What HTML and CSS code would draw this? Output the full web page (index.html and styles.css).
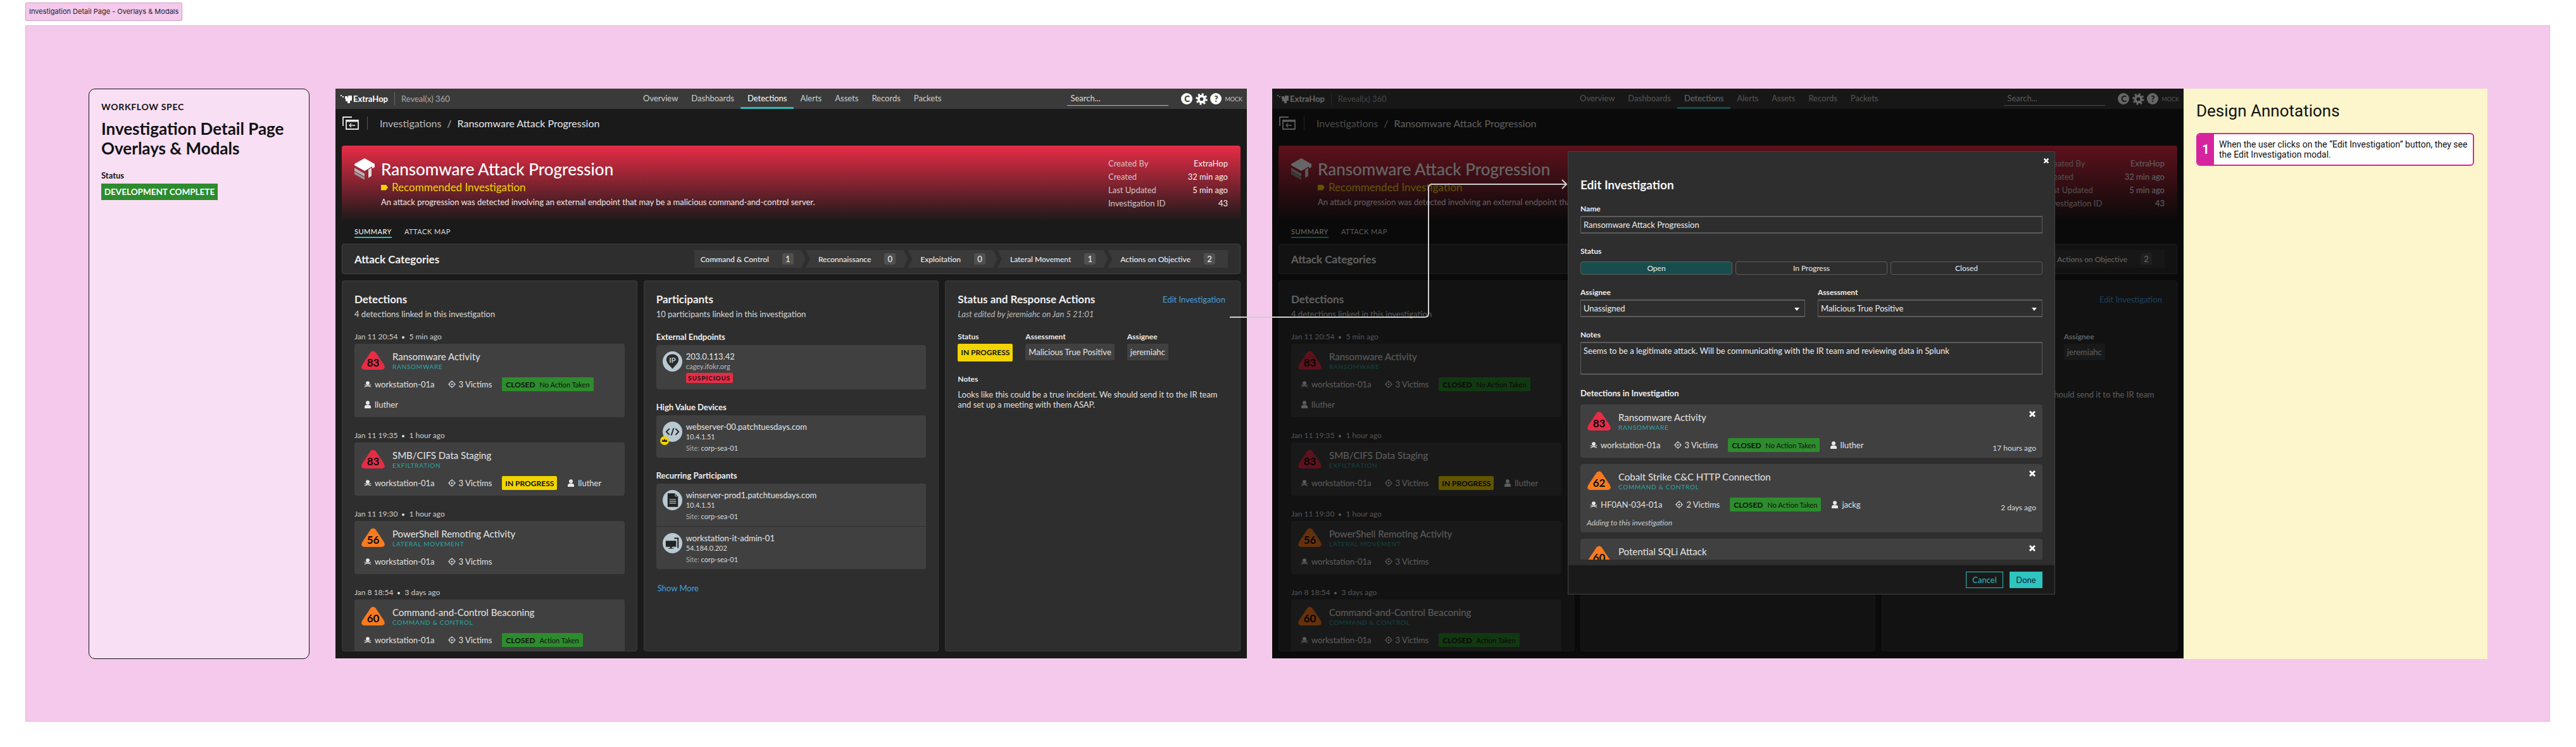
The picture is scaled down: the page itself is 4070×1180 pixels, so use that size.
FILE: index.html
```html
<!DOCTYPE html>
<html lang="en">
<head>
<meta charset="utf-8">
<title>Investigation Detail Page - Overlays &amp; Modals</title>
<link rel="stylesheet" href="styles.css">
</head>
<body>
<svg class="defs" xmlns="http://www.w3.org/2000/svg">
  <symbol id="tri" viewBox="0 0 37 30"><path d="M14.5 2.500Q18.500-1.500 22.500 2.500L35.500 22Q39.500 30 31 30L6 30Q-2.500 30 1.500 22Z"/></symbol>
  <symbol id="skull" viewBox="0 0 14 12"><path d="M7 .5C4.800.5 3.500 2 3.500 3.800 3.500 5 4.100 5.800 5 6.300V7.500H9V6.300C9.900 5.800 10.500 5 10.500 3.800 10.500 2 9.200.5 7 .5Z"/><path d="M1 6.800 13 11M13 6.800 1 11" stroke="currentColor" stroke-width="1.300" fill="none"/></symbol>
  <symbol id="target" viewBox="0 0 12 12"><circle cx="6" cy="6" r="4" fill="none" stroke="currentColor" stroke-width="1.200"/><circle cx="6" cy="6" r="1.300"/><path d="M6 0V2.200M6 9.800V12M0 6H2.200M9.800 6H12" stroke="currentColor" stroke-width="1.200"/></symbol>
  <symbol id="user" viewBox="0 0 12 12"><circle cx="6" cy="3.300" r="3"/><path d="M1 12V9.500C1 7.500 2.800 6.500 6 6.500S11 7.500 11 9.500V12Z"/></symbol>
  <symbol id="cross" viewBox="0 0 12 12"><path d="M2 2 10 10M10 2 2 10" stroke="currentColor" stroke-width="3" fill="none"/></symbol>
  <symbol id="logo" viewBox="0 0 20 16"><path d="M0 2h2v2H0zM3 4h2v2H3zM7 4h4v2h1V3h6v8h-3v4h-4v-3H8V8H7z"/></symbol>
  <symbol id="back" viewBox="0 0 26 21"><path d="M15 1H1V15M6 6H25V20H6Z" fill="none" stroke="currentColor" stroke-width="1.800"/><path d="M6 6H25V8.500H6Z"/><path d="M20 14H11M14 11 11 14 14 17" fill="none" stroke="currentColor" stroke-width="1.300"/></symbol>
  <symbol id="stack" viewBox="0 0 32 34"><path d="M0 21 12 28 16 30V34L0 25Z" fill="#999"/><path d="M0 15 12 22 16 24V29L0 20Z" fill="#b5b5b5"/><path d="M22 18 27 15V28L22 31Z" fill="#ddd"/><path d="M16 0 32 9V14L28 16V13L16 20 0 11V9Z" fill="#fff"/></symbol>
  <symbol id="gear" viewBox="0 0 20 20"><circle cx="10" cy="10" r="5" fill="none" stroke="currentColor" stroke-width="4"/><circle cx="10" cy="10" r="8" fill="none" stroke="currentColor" stroke-width="3.500" stroke-dasharray="3.100 3.180"/></symbol>
  <symbol id="ip" viewBox="0 0 32 32"><path d="M16 4C10 4 6 8 6 13 6 19 12 23 16 28 20 23 26 19 26 13 26 8 22 4 16 4Z" fill="#2b2b2b"/><text x="16" y="18" text-anchor="middle" font-family="Lato" font-weight="700" font-size="12" fill="#b9c9d1">IP</text></symbol>
  <symbol id="code" viewBox="0 0 32 32"><path d="M11 11 6 16 11 21M21 11 26 16 21 21M18 10 14 22" fill="none" stroke="#222" stroke-width="2"/></symbol>
  <symbol id="doc" viewBox="0 0 32 32"><path d="M8 5H20L25 10V27H8Z" fill="#222"/><path d="M20.500 5V9.500H25" fill="none" stroke="#b9c9d1"/><path d="M11 15H22M11 18H22M11 21H22" stroke="#b9c9d1" stroke-width="1.200"/></symbol>
  <symbol id="pc" viewBox="0 0 32 32"><path d="M5 12H22V22H15V24H18V25H9V24H12V22H5Z" fill="#222"/><path d="M19 7H26V24H24V9H19Z" fill="#222"/></symbol>
  <symbol id="crown" viewBox="0 0 14 14"><circle cx="7" cy="7" r="7" fill="#f2d400"/><path d="M3 5 5 7 7 4 9 7 11 5V9H3Z" fill="#222"/></symbol>
</svg>

<div class="frame-tag">Investigation Detail Page - Overlays &amp; Modals</div>

<section class="frame">
  <aside class="spec">
    <div class="spec-kicker">WORKFLOW SPEC</div>
    <h1 class="spec-title">Investigation Detail Page<br>Overlays &amp; Modals</h1>
    <div class="spec-label">Status</div>
    <div class="spec-badge">DEVELOPMENT COMPLETE</div>
  </aside>

  <!-- Base screen -->
  <main class="app">
    <header class="topbar">
      <div class="brand"><svg class="logo"><use href="#logo"/></svg><span class="brand-name">ExtraHop</span><span class="brand-product">Reveal(x) 360</span></div>
      <nav class="nav"><a>Overview</a><a>Dashboards</a><a class="on">Detections</a><a>Alerts</a><a>Assets</a><a>Records</a><a>Packets</a></nav>
      <div class="tools"><div class="search">Search...</div><span class="round">C</span><svg class="gear"><use href="#gear"/></svg><span class="round">?</span><span class="mock">MOCK</span></div>
    </header>
    <div class="crumbbar"><svg class="back"><use href="#back"/></svg><div class="crumbs"><span class="crumb-parent">Investigations</span><span class="crumb-sep">/</span><span>Ransomware Attack Progression</span></div></div>
    <div class="content">
      <div class="hero">
        <div class="hero-main">
          <svg class="stack"><use href="#stack"/></svg>
          <div>
            <h2 class="hero-title">Ransomware Attack Progression</h2>
            <div class="hero-rec"><span class="rec-mark"></span>Recommended Investigation</div>
            <p class="hero-desc">An attack progression was detected involving an external endpoint that may be a malicious command-and-control server.</p>
          </div>
        </div>
        <dl class="hero-meta"><dt>Created By</dt><dd>ExtraHop</dd><dt>Created</dt><dd>32 min ago</dd><dt>Last Updated</dt><dd>5 min ago</dd><dt>Investigation ID</dt><dd>43</dd></dl>
      </div>
      <div class="tabs"><span class="tab on">SUMMARY</span><span class="tab">ATTACK MAP</span></div>
      <div class="attack">
        <h3 class="attack-title">Attack Categories</h3>
        <div class="chevrons">
          <div class="chev first"><span>Command &amp; Control</span><b>1</b></div>
          <div class="chev"><span>Reconnaissance</span><b>0</b></div>
          <div class="chev"><span>Exploitation</span><b>0</b></div>
          <div class="chev"><span>Lateral Movement</span><b>1</b></div>
          <div class="chev last"><span>Actions on Objective</span><b>2</b></div>
        </div>
      </div>
      <div class="panels">
        <div class="panel">
          <h3 class="panel-title">Detections</h3>
          <p class="panel-sub">4 detections linked in this investigation</p>
          <div class="det-date">Jan 11 20:54<i></i>5 min ago</div>
          <article class="det-card">
            <div class="det-head"><div class="sev red"><svg><use href="#tri"/></svg><span>83</span></div><div><div class="det-name">Ransomware Activity</div><div class="det-cat">RANSOMWARE</div></div></div>
            <div class="det-row"><span class="mi host"><svg><use href="#skull"/></svg>workstation-01a</span><span class="mi"><svg><use href="#target"/></svg>3 Victims</span><span class="st closed"><b>CLOSED</b>No Action Taken</span><span class="mi"><svg><use href="#user"/></svg>lluther</span></div>
          </article>
          <div class="det-date">Jan 11 19:35<i></i>1 hour ago</div>
          <article class="det-card">
            <div class="det-head"><div class="sev red"><svg><use href="#tri"/></svg><span>83</span></div><div><div class="det-name">SMB/CIFS Data Staging</div><div class="det-cat">EXFILTRATION</div></div></div>
            <div class="det-row"><span class="mi host"><svg><use href="#skull"/></svg>workstation-01a</span><span class="mi"><svg><use href="#target"/></svg>3 Victims</span><span class="st progress"><b>IN PROGRESS</b></span><span class="mi"><svg><use href="#user"/></svg>lluther</span></div>
          </article>
          <div class="det-date">Jan 11 19:30<i></i>1 hour ago</div>
          <article class="det-card">
            <div class="det-head"><div class="sev orange"><svg><use href="#tri"/></svg><span>56</span></div><div><div class="det-name">PowerShell Remoting Activity</div><div class="det-cat">LATERAL MOVEMENT</div></div></div>
            <div class="det-row"><span class="mi host"><svg><use href="#skull"/></svg>workstation-01a</span><span class="mi"><svg><use href="#target"/></svg>3 Victims</span></div>
          </article>
          <div class="det-date">Jan 8 18:54<i></i>3 days ago</div>
          <article class="det-card">
            <div class="det-head"><div class="sev orange"><svg><use href="#tri"/></svg><span>60</span></div><div><div class="det-name">Command-and-Control Beaconing</div><div class="det-cat">COMMAND &amp; CONTROL</div></div></div>
            <div class="det-row"><span class="mi host"><svg><use href="#skull"/></svg>workstation-01a</span><span class="mi"><svg><use href="#target"/></svg>3 Victims</span><span class="st closed"><b>CLOSED</b>Action Taken</span></div>
          </article>
        </div>
        <div class="panel">
          <h3 class="panel-title">Participants</h3>
          <p class="panel-sub">10 participants linked in this investigation</p>
          <h4 class="group-title">External Endpoints</h4>
          <div class="plist"><div class="part ext"><div class="avatar"><svg><use href="#ip"/></svg></div><div><div class="part-name">203.0.113.42</div><div class="part-sub">cagey.ifokr.org</div><span class="susp">SUSPICIOUS</span></div></div></div>
          <h4 class="group-title">High Value Devices</h4>
          <div class="plist"><div class="part"><div class="avatar"><svg><use href="#code"/></svg><svg class="crown"><use href="#crown"/></svg></div><div><div class="part-name">webserver-00.patchtuesdays.com</div><div class="part-sub lt">10.4.1.51</div><div class="part-site"><span>Site:</span> corp-sea-01</div></div></div></div>
          <h4 class="group-title">Recurring Participants</h4>
          <div class="plist">
            <div class="part"><div class="avatar"><svg><use href="#doc"/></svg></div><div><div class="part-name">winserver-prod1.patchtuesdays.com</div><div class="part-sub lt">10.4.1.51</div><div class="part-site"><span>Site:</span> corp-sea-01</div></div></div>
            <div class="part"><div class="avatar"><svg><use href="#pc"/></svg></div><div><div class="part-name">workstation-it-admin-01</div><div class="part-sub lt">54.184.0.202</div><div class="part-site"><span>Site:</span> corp-sea-01</div></div></div>
          </div>
          <a class="show-more">Show More</a>
        </div>
        <div class="panel">
          <div class="status-head"><h3 class="panel-title">Status and Response Actions</h3><a class="edit-link">Edit Investigation</a></div>
          <p class="panel-sub edited">Last edited by jeremiahc on Jan 5 21:01</p>
          <div class="status-cols">
            <div><div class="field-label">Status</div><div class="status-big">IN PROGRESS</div></div>
            <div><div class="field-label">Assessment</div><div class="field-box">Malicious True Positive</div></div>
            <div><div class="field-label">Assignee</div><div class="field-box">jeremiahc</div></div>
          </div>
          <div class="field-label notes-label">Notes</div>
          <p class="notes-body">Looks like this could be a true incident. We should send it to the IR team and set up a meeting with them ASAP.</p>
        </div>
      </div>
    </div>
  </main>

  <!-- Screen with modal -->
  <main class="app second">
    <header class="topbar">
      <div class="brand"><svg class="logo"><use href="#logo"/></svg><span class="brand-name">ExtraHop</span><span class="brand-product">Reveal(x) 360</span></div>
      <nav class="nav"><a>Overview</a><a>Dashboards</a><a class="on">Detections</a><a>Alerts</a><a>Assets</a><a>Records</a><a>Packets</a></nav>
      <div class="tools"><div class="search">Search...</div><span class="round">C</span><svg class="gear"><use href="#gear"/></svg><span class="round">?</span><span class="mock">MOCK</span></div>
    </header>
    <div class="crumbbar"><svg class="back"><use href="#back"/></svg><div class="crumbs"><span class="crumb-parent">Investigations</span><span class="crumb-sep">/</span><span>Ransomware Attack Progression</span></div></div>
    <div class="content">
      <div class="hero">
        <div class="hero-main">
          <svg class="stack"><use href="#stack"/></svg>
          <div>
            <h2 class="hero-title">Ransomware Attack Progression</h2>
            <div class="hero-rec"><span class="rec-mark"></span>Recommended Investigation</div>
            <p class="hero-desc">An attack progression was detected involving an external endpoint that may be a malicious command-and-control server.</p>
          </div>
        </div>
        <dl class="hero-meta"><dt>Created By</dt><dd>ExtraHop</dd><dt>Created</dt><dd>32 min ago</dd><dt>Last Updated</dt><dd>5 min ago</dd><dt>Investigation ID</dt><dd>43</dd></dl>
      </div>
      <div class="tabs"><span class="tab on">SUMMARY</span><span class="tab">ATTACK MAP</span></div>
      <div class="attack">
        <h3 class="attack-title">Attack Categories</h3>
        <div class="chevrons">
          <div class="chev first"><span>Command &amp; Control</span><b>1</b></div>
          <div class="chev"><span>Reconnaissance</span><b>0</b></div>
          <div class="chev"><span>Exploitation</span><b>0</b></div>
          <div class="chev"><span>Lateral Movement</span><b>1</b></div>
          <div class="chev last"><span>Actions on Objective</span><b>2</b></div>
        </div>
      </div>
      <div class="panels">
        <div class="panel">
          <h3 class="panel-title">Detections</h3>
          <p class="panel-sub">4 detections linked in this investigation</p>
          <div class="det-date">Jan 11 20:54<i></i>5 min ago</div>
          <article class="det-card">
            <div class="det-head"><div class="sev red"><svg><use href="#tri"/></svg><span>83</span></div><div><div class="det-name">Ransomware Activity</div><div class="det-cat">RANSOMWARE</div></div></div>
            <div class="det-row"><span class="mi host"><svg><use href="#skull"/></svg>workstation-01a</span><span class="mi"><svg><use href="#target"/></svg>3 Victims</span><span class="st closed"><b>CLOSED</b>No Action Taken</span><span class="mi"><svg><use href="#user"/></svg>lluther</span></div>
          </article>
          <div class="det-date">Jan 11 19:35<i></i>1 hour ago</div>
          <article class="det-card">
            <div class="det-head"><div class="sev red"><svg><use href="#tri"/></svg><span>83</span></div><div><div class="det-name">SMB/CIFS Data Staging</div><div class="det-cat">EXFILTRATION</div></div></div>
            <div class="det-row"><span class="mi host"><svg><use href="#skull"/></svg>workstation-01a</span><span class="mi"><svg><use href="#target"/></svg>3 Victims</span><span class="st progress"><b>IN PROGRESS</b></span><span class="mi"><svg><use href="#user"/></svg>lluther</span></div>
          </article>
          <div class="det-date">Jan 11 19:30<i></i>1 hour ago</div>
          <article class="det-card">
            <div class="det-head"><div class="sev orange"><svg><use href="#tri"/></svg><span>56</span></div><div><div class="det-name">PowerShell Remoting Activity</div><div class="det-cat">LATERAL MOVEMENT</div></div></div>
            <div class="det-row"><span class="mi host"><svg><use href="#skull"/></svg>workstation-01a</span><span class="mi"><svg><use href="#target"/></svg>3 Victims</span></div>
          </article>
          <div class="det-date">Jan 8 18:54<i></i>3 days ago</div>
          <article class="det-card">
            <div class="det-head"><div class="sev orange"><svg><use href="#tri"/></svg><span>60</span></div><div><div class="det-name">Command-and-Control Beaconing</div><div class="det-cat">COMMAND &amp; CONTROL</div></div></div>
            <div class="det-row"><span class="mi host"><svg><use href="#skull"/></svg>workstation-01a</span><span class="mi"><svg><use href="#target"/></svg>3 Victims</span><span class="st closed"><b>CLOSED</b>Action Taken</span></div>
          </article>
        </div>
        <div class="panel"></div>
        <div class="panel">
          <div class="status-head"><h3 class="panel-title">Status and Response Actions</h3><a class="edit-link">Edit Investigation</a></div>
          <p class="panel-sub edited">Last edited by jeremiahc on Jan 5 21:01</p>
          <div class="status-cols">
            <div><div class="field-label">Status</div><div class="status-big">IN PROGRESS</div></div>
            <div><div class="field-label">Assessment</div><div class="field-box">Malicious True Positive</div></div>
            <div><div class="field-label">Assignee</div><div class="field-box">jeremiahc</div></div>
          </div>
          <div class="field-label notes-label">Notes</div>
          <p class="notes-body">Looks like this could be a true incident. We should send it to the IR team and set up a meeting with them ASAP.</p>
        </div>
      </div>
    </div>
    <div class="scrim"></div>
    <div class="modal">
      <svg class="modal-close"><use href="#cross"/></svg>
      <div class="modal-body">
        <h2 class="modal-title">Edit Investigation</h2>
        <div class="m-label">Name</div>
        <div class="m-input">Ransomware Attack Progression</div>
        <div class="m-label mt">Status</div>
        <div class="seg"><span class="on">Open</span><span>In Progress</span><span>Closed</span></div>
        <div class="m-two">
          <div><div class="m-label">Assignee</div><div class="m-input select">Unassigned<i class="caret"></i></div></div>
          <div><div class="m-label">Assessment</div><div class="m-input select">Malicious True Positive<i class="caret"></i></div></div>
        </div>
        <div class="m-label mt">Notes</div>
        <div class="m-input area">Seems to be a legitimate attack. Will be communicating with the IR team and reviewing data in Splunk</div>
        <div class="m-label dets">Detections in Investigation</div>
        <div class="m-list">
          <article class="det-card">
            <svg class="card-x"><use href="#cross"/></svg>
            <div class="det-head"><div class="sev red"><svg><use href="#tri"/></svg><span>83</span></div><div><div class="det-name">Ransomware Activity</div><div class="det-cat">RANSOMWARE</div></div></div>
            <div class="det-row"><span class="mi host"><svg><use href="#skull"/></svg>workstation-01a</span><span class="mi"><svg><use href="#target"/></svg>3 Victims</span><span class="st closed"><b>CLOSED</b>No Action Taken</span><span class="mi"><svg><use href="#user"/></svg>lluther</span><span class="ago">17 hours ago</span></div>
          </article>
          <article class="det-card">
            <svg class="card-x"><use href="#cross"/></svg>
            <div class="det-head"><div class="sev orange"><svg><use href="#tri"/></svg><span>62</span></div><div><div class="det-name">Cobalt Strike C&amp;C HTTP Connection</div><div class="det-cat">COMMAND &amp; CONTROL</div></div></div>
            <div class="det-row"><span class="mi host"><svg><use href="#skull"/></svg>HF0AN-034-01a</span><span class="mi"><svg><use href="#target"/></svg>2 Victims</span><span class="st closed"><b>CLOSED</b>No Action Taken</span><span class="mi"><svg><use href="#user"/></svg>jackg</span><span class="ago">2 days ago</span></div>
            <p class="det-note">Adding to this investigation</p>
          </article>
          <article class="det-card">
            <svg class="card-x"><use href="#cross"/></svg>
            <div class="det-head"><div class="sev orange"><svg><use href="#tri"/></svg><span>60</span></div><div><div class="det-name">Potential SQLi Attack</div><div class="det-cat">RANSOMWARE</div></div></div>
          </article>
        </div>
      </div>
      <footer class="modal-foot"><button class="btn-ghost">Cancel</button><button class="btn-solid">Done</button></footer>
    </div>
  </main>

  <aside class="notes">
    <h2 class="notes-title">Design Annotations</h2>
    <div class="note"><span class="note-num">1</span><p>When the user clicks on the “Edit Investigation” button, they see the Edit Investigation modal.</p></div>
  </aside>

  <svg class="connector" viewBox="0 0 3989 1100"><path d="M1903 461H2211Q2217 461 2217 455V257Q2217 251 2223 251H2435M2428 244 2435 251 2428 258" fill="none" stroke="#cfcfcf" stroke-width="2"/></svg>
</section>
</body>
</html>
```

FILE: styles.css
```css
* { box-sizing: border-box; }
html, body { margin: 0; padding: 0; }
body { background: #fff; font-family: Lato, sans-serif; color: #e6e6e6; overflow: hidden; }
h1, h2, h3, h4, p, dl, dd { margin: 0; }
.defs { display: none; }

.frame-tag { width: fit-content; height: 29px; margin: 4px 0 7px 40px; padding: 0 5px; background: #f5c9eb; border: 1px solid #cf9cc4; border-radius: 2px; font: 400 11px/27px Inter, sans-serif; color: #222; white-space: nowrap; }
.frame { position: relative; display: flex; align-items: flex-start; width: 3989px; height: 1100px; margin-left: 40px; padding: 100px 0 0 100px; background: #f5c9eb; border: 1px solid #e4b6da; }

.spec { flex: none; width: 349px; height: 901px; margin: -1px 41px 0 -1px; padding: 20px 19px; background: #f8dff4; border: 1px solid #111; border-radius: 10px; color: #111; }
.spec-kicker { font-size: 14px; line-height: 16px; font-weight: 700; letter-spacing: .7px; white-space: nowrap; }
.spec-title { margin-top: 11px; font-size: 26px; line-height: 31px; font-weight: 700; white-space: nowrap; }
.spec-label { margin-top: 18px; font-size: 13px; line-height: 18px; font-weight: 700; }
.spec-badge { width: 184px; height: 26px; margin-top: 4px; background: #2d8c2d; color: #fff; font-size: 13.500px; font-weight: 700; line-height: 26px; text-align: center; white-space: nowrap; }

.app { position: relative; flex: none; display: flex; flex-direction: column; width: 1440px; height: 900px; margin-top: -1px; background: #1a1a1a; overflow: hidden; }
.app.second { margin-left: 40px; }

.topbar { flex: none; display: flex; align-items: center; height: 32px; background: #3a3a3a; padding: 0 7px 0 8px; }
.brand { flex: none; display: flex; align-items: center; width: 467.500px; }
.logo { width: 20px; height: 16px; fill: #fff; }
.brand-name { font-size: 13px; font-weight: 700; color: #fff; padding-right: 10px; line-height: 20px; border-right: 1px solid #666; }
.brand-product { font-size: 13px; color: #aaa; margin-left: 10px; }
.nav { display: flex; height: 32px; }
.nav a { display: block; padding: 0 10.500px; font-size: 13px; line-height: 30px; color: #cfcfcf; }
.nav a.on { color: #fff; border-bottom: 3px solid #2bbdb9; }
.tools { margin-left: auto; display: flex; align-items: center; }
.search { width: 160px; height: 22px; padding-left: 5px; margin-right: 20px; font-size: 13px; line-height: 20px; color: #ddd; border-bottom: 1px solid #bbb; }
.round { width: 18px; height: 18px; border-radius: 50%; background: #fff; color: #333; font-size: 13px; font-weight: 900; line-height: 18px; text-align: center; }
.gear { width: 19px; height: 19px; color: #fff; margin: 0 4.500px; }
.mock { margin-left: 5px; font-size: 9px; color: #ccc; }

.crumbbar { flex: none; display: flex; align-items: center; height: 48px; padding-left: 11px; }
.back { width: 26px; height: 21px; color: #e6e6e6; fill: #e6e6e6; margin-top: -3px; }
.crumbs { display: flex; align-items: center; height: 21px; margin: -3px 0 0 13px; padding-left: 19px; border-left: 1px solid #555; font-size: 16px; color: #e8e8e8; white-space: nowrap; }
.crumb-parent { color: #bbb; }
.crumb-sep { margin: 0 9px; color: #bbb; }

.content { flex: 1; display: flex; flex-direction: column; padding: 10px 10px 11px; min-height: 0; }
.hero { flex: none; display: flex; justify-content: space-between; height: 120px; padding: 18px 20px 0; border-radius: 4px 4px 0 0; background: linear-gradient(#e82c46, #1a1a1a); }
.hero-main { display: flex; }
.stack { width: 32px; height: 34px; margin: 2px 10px 0 0; }
.hero-title { margin-top: 1px; font-size: 26px; line-height: 36px; font-weight: 500; color: #fff; white-space: nowrap; }
.hero-rec { display: flex; align-items: center; font-size: 17px; line-height: 22px; color: #f2d400; }
.rec-mark { width: 11px; height: 9px; margin-right: 6px; background: #f2d400; clip-path: polygon(0 0, 70% 0, 100% 50%, 70% 100%, 0 100%); }
.hero-desc { margin-top: 3px; font-size: 13px; line-height: 18px; color: #eaeaea; white-space: nowrap; }
.hero-meta { display: grid; grid-template-columns: 1fr auto; width: 189px; height: 84px; font-size: 13px; line-height: 21px; }
.hero-meta dt { color: #d3c4c6; }
.hero-meta dd { text-align: right; color: #f2f2f2; }

.tabs { flex: none; display: flex; gap: 20px; padding: 8px 20px 9px; font-size: 11px; letter-spacing: .5px; line-height: 16px; color: #ddd; }
.tab { height: 18px; }
.tab.on { color: #fff; border-bottom: 2px solid #2bbdb9; }

.attack { flex: none; display: flex; align-items: center; justify-content: space-between; height: 48px; padding: 0 19px; background: #2e2e2e; border: 1px solid #444; border-radius: 4px; }
.attack-title { font-size: 17px; font-weight: 700; color: #f0f0f0; }
.chevrons { display: flex; }
.chev { display: flex; align-items: center; gap: 21px; height: 28px; padding: 0 19px 0 20px; background: #3a3a3a; font-size: 12px; font-weight: 500; color: #f0f0f0; white-space: nowrap; clip-path: polygon(0 0, calc(100% - 7px) 0, 100% 50%, calc(100% - 7px) 100%, 0 100%, 7px 50%); }
.chev.first { padding-left: 10px; clip-path: polygon(0 0, calc(100% - 7px) 0, 100% 50%, calc(100% - 7px) 100%, 0 100%); }
.chev.last { padding-right: 20px; clip-path: polygon(0 0, 100% 0, 100% 100%, 0 100%, 7px 50%); }
.chev b { width: 18px; height: 18px; border-radius: 3px; background: #505050; font-size: 13px; font-weight: 500; line-height: 18px; text-align: center; }

.panels { flex: 1; min-height: 0; display: grid; grid-template-columns: repeat(3, 1fr); gap: 10px; margin-top: 10px; }
.panel { padding: 18px 19px 0; background: #2e2e2e; border: 1px solid #3c3c3c; border-radius: 4px; overflow: hidden; }
.panel-title { font-size: 17px; line-height: 22px; font-weight: 700; color: #f0f0f0; white-space: nowrap; }
.panel-sub { margin-top: 3px; font-size: 13px; line-height: 18px; color: #d8d8d8; }

.det-date { margin: 18px 0 2px; font-size: 12px; line-height: 18px; color: #cfcfcf; }
.det-date i { display: inline-block; width: 4px; height: 4px; margin: 0 7px; border-radius: 50%; background: #e0e0e0; vertical-align: middle; }
.det-card + .det-date { margin-top: 20px; }
.det-card { position: relative; padding: 11px 10px 9px; background: #404040; border-radius: 4px; }
.det-head { display: flex; gap: 12px; padding-left: 1px; }
.sev { display: grid; flex: none; width: 37px; height: 30px; }
.sev > * { grid-area: 1 / 1; }
.sev svg { width: 37px; height: 30px; }
.sev.red svg { fill: #e82c46; }
.sev.orange svg { fill: #f97a1f; }
.sev span { align-self: end; text-align: center; font-size: 17px; line-height: 22px; font-weight: 700; color: #0a0a0a; }
.det-name { font-size: 15px; line-height: 20px; color: #e6e6e6; margin-top: -1px; }
.det-cat { font-size: 10px; line-height: 12px; letter-spacing: .75px; color: #2aa8a5; }
.det-row { display: flex; flex-wrap: wrap; align-items: center; gap: 10px 16px; margin-top: 11px; padding-left: 5px; }
.mi { display: flex; align-items: center; height: 22px; font-size: 13px; color: #e0e0e0; white-space: nowrap; }
.mi svg { width: 12px; height: 12px; margin-right: 5px; fill: #e8e8e8; color: #e8e8e8; }
.mi.host { margin-right: 5px; }
.st { display: flex; align-items: center; gap: 7px; height: 22px; padding: 0 6px; border-radius: 2px; font-size: 11px; color: #111; white-space: nowrap; }
.st b { font-size: 12px; font-weight: 700; color: #111; }
.st.closed { background: #2d8c2d; }
.st.progress { background: #f2d400; padding: 0 5px; }
.ago { margin: 8px 0 -2px auto; font-size: 12px; line-height: 16px; color: #ddd; }
.det-note { margin: 10px 0 -2px; font-size: 12px; line-height: 16px; font-style: italic; color: #ccc; }
.card-x { position: absolute; top: 9px; right: 10px; width: 12px; height: 12px; color: #fff; }

.group-title { margin: 19px 0 4px; font-size: 13px; line-height: 18px; font-weight: 700; color: #eee; }
.panel-sub + .group-title { margin-top: 18px; }
.plist { background: #404040; border-radius: 4px; overflow: hidden; }
.part { display: flex; gap: 6px; height: 67px; padding: 10px; }
.part + .part { height: 68px; border-top: 1px solid #2e2e2e; }
.part.ext { height: 70px; }
.avatar { position: relative; flex: none; width: 31px; height: 32px; border-radius: 50%; background: #b9c9d1; }
.avatar svg { display: block; width: 31px; height: 32px; }
.avatar .crown { position: absolute; left: -4px; top: 23px; width: 14px; height: 14px; }
.part-name { font-size: 13px; line-height: 16px; color: #e6e6e6; }
.part-sub { font-size: 11px; line-height: 15px; color: #bbb; }
.part-sub.lt { color: #ddd; }
.part-site { margin-top: 3px; font-size: 11px; line-height: 15px; color: #ddd; }
.part-site span { color: #aaa; }
.susp { display: block; width: 74px; height: 16px; margin-top: 3px; border-radius: 2px; background: #e82c46; color: #111; font-size: 10px; line-height: 16px; font-weight: 700; letter-spacing: .9px; text-align: center; white-space: nowrap; }
.show-more { display: block; margin: 21px 0 0 2px; font-size: 13px; line-height: 18px; color: #4a9edd; }

.status-head { display: flex; justify-content: space-between; padding-right: 4px; }
.edit-link { font-size: 13px; line-height: 22px; color: #4a9edd; white-space: nowrap; }
.edited { font-style: italic; color: #bbb; font-size: 13px; }
.status-cols { display: flex; gap: 20px; margin-top: 18px; }
.field-label { font-size: 12px; line-height: 18px; font-weight: 700; color: #ececec; }
.status-big { width: 87px; height: 28px; margin-top: 2px; border-radius: 2px; background: #f2d400; color: #111; font-size: 12px; font-weight: 700; line-height: 28px; text-align: center; white-space: nowrap; }
.field-box { height: 26px; margin-top: 2px; padding: 0 5px; border-radius: 2px; background: #404040; font-size: 13px; line-height: 26px; color: #e6e6e6; white-space: nowrap; }
.notes-label { margin-top: 19px; }
.notes-body { margin-top: 7px; font-size: 13px; line-height: 16px; color: #e0e0e0; }

.scrim { position: absolute; inset: 0; background: rgba(0, 0, 0, .6); }
.modal { position: absolute; left: 467px; top: 99px; display: flex; flex-direction: column; width: 770px; height: 700px; background: #2e2e2e; border: 1px solid #444; }
.modal-close { position: absolute; top: 9px; right: 8px; width: 10px; height: 10px; color: #fff; }
.modal-body { flex: 1; min-height: 0; padding: 38px 19px 10px; overflow: hidden; }
.modal-title { margin-bottom: 15px; font-size: 19px; line-height: 28px; font-weight: 700; color: #f5f5f5; }
.m-label { font-size: 12px; line-height: 18px; font-weight: 700; color: #eee; }
.m-label.mt { margin-top: 19px; }
.m-label.dets { margin: 20px 0 9px; font-size: 13px; }
.m-input { position: relative; height: 28px; margin-top: 2px; padding: 0 4px; border: 1px solid #5c5c5c; border-width: 2px 1px; font-size: 13px; line-height: 24px; color: #eee; }
.m-input.area { height: 52px; line-height: 24px; }
.caret { position: absolute; right: 8px; top: 11px; width: 0; height: 0; border: 4px solid transparent; border-top: 5px solid #fff; }
.seg { display: grid; grid-template-columns: repeat(3, 1fr); gap: 5px; height: 21px; margin-top: 7px; }
.seg span { height: 21px; border: 1px solid #5c5c5c; border-radius: 4px; font-size: 12px; line-height: 20px; text-align: center; color: #eee; }
.seg span.on { background: #174d4d; }
.m-two { display: grid; grid-template-columns: 1fr 1fr; gap: 20px; margin-top: 19px; }
.m-list { display: flex; flex-direction: column; gap: 10px; height: 245px; overflow: hidden; }
.m-list .det-card { flex: none; }
.modal-foot { flex: none; display: flex; justify-content: flex-end; align-items: center; gap: 10px; height: 46px; padding-right: 19px; background: #1a1a1a; border-top: 1px solid #2a2a2a; }
.btn-ghost, .btn-solid { height: 26px; padding: 0; border-radius: 0; font: 400 13px/22px Lato, sans-serif; }
.btn-ghost { width: 59px; border: 1px solid #2bbdb9; background: transparent; color: #2bbdb9; }
.btn-solid { width: 52px; border: 0; background: #2ec4c0; color: #123; }

.notes { flex: none; width: 480px; height: 901px; margin-top: -1px; padding: 19px 20px; background: #fdf6cc; color: #111; font-family: Roboto, sans-serif; }
.notes-title { font-size: 26px; line-height: 32px; font-weight: 400; color: #111; }
.note { display: flex; width: 439px; height: 52px; margin-top: 19px; border: 2px solid #d6249f; border-radius: 6px; background: #fff; overflow: hidden; }
.note-num { flex: none; width: 26px; background: #d6249f; color: #fff; font-size: 20px; font-weight: 700; line-height: 48px; text-align: center; }
.note p { padding: 8px 0 0 8px; font-size: 14px; line-height: 16px; color: #111; }

.connector { position: absolute; left: -1px; top: -1px; width: 3989px; height: 1100px; pointer-events: none; }
```
